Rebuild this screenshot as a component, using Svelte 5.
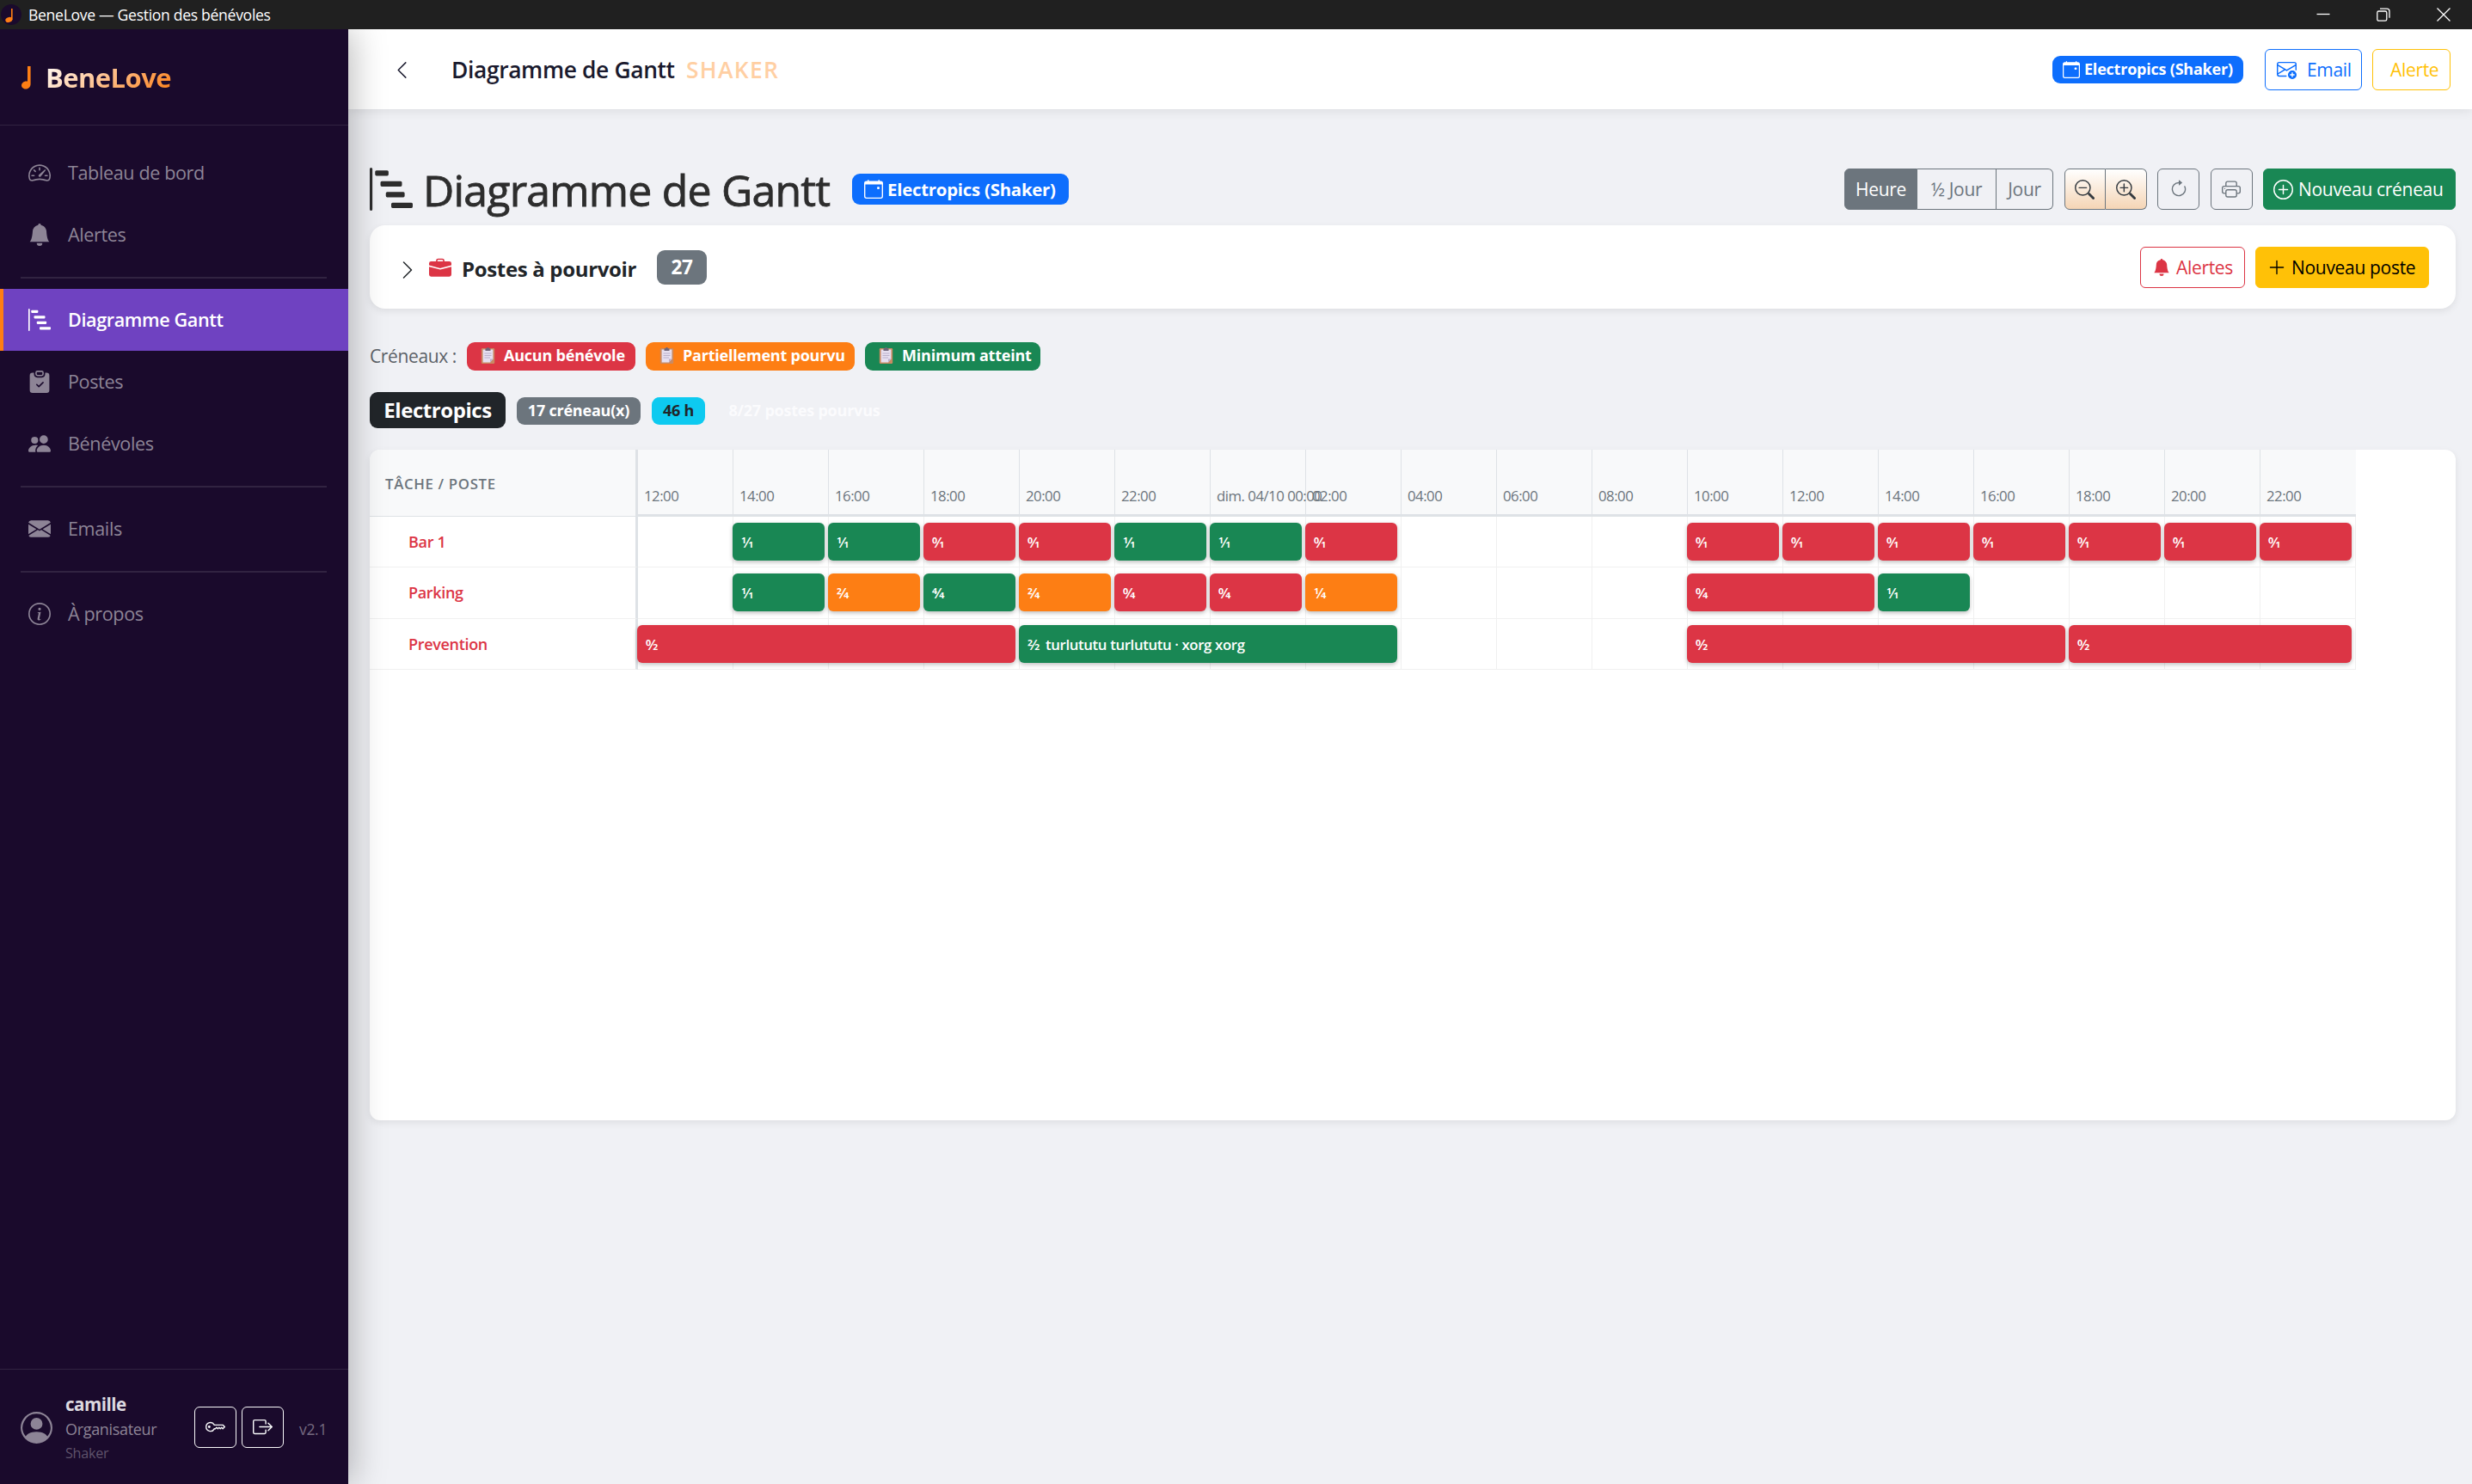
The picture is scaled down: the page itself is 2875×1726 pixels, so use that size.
<script>
  // Outline glyphs on a 16-unit grid; every icon is a list of path data.
  const icons = {
    speedometer: ['M8 4a.5.5 0 0 1 .5.5V6a.5.5 0 0 1-1 0V4.5A.5.5 0 0 1 8 4M3.732 5.732a.5.5 0 0 1 .707 0l.915.914a.5.5 0 1 1-.708.708l-.914-.915a.5.5 0 0 1 0-.707M2 10a.5.5 0 0 1 .5-.5h1.586a.5.5 0 0 1 0 1H2.5A.5.5 0 0 1 2 10m9.5 0a.5.5 0 0 1 .5-.5h1.5a.5.5 0 0 1 0 1H12a.5.5 0 0 1-.5-.5m.754-4.246a.39.39 0 0 0-.527-.02L7.547 9.31a.91.91 0 1 0 1.302 1.258l3.434-4.297a.39.39 0 0 0-.029-.518z', 'M0 10a8 8 0 1 1 15.547 2.661c-.442 1.253-1.845 1.602-2.932 1.25C11.309 13.488 9.475 13 8 13c-1.474 0-3.31.488-4.615.911-1.087.352-2.49.003-2.932-1.25A8 8 0 0 1 0 10m8-7a7 7 0 0 0-6.603 9.329c.203.575.923.876 1.68.63C4.397 12.533 6.358 12 8 12s3.604.532 4.923.96c.757.245 1.477-.056 1.68-.631A7 7 0 0 0 8 3'],
    bell: ['M8 16a2 2 0 0 0 2-2H6a2 2 0 0 0 2 2m.995-14.901a1 1 0 1 0-1.99 0A5 5 0 0 0 3 6c0 1.098-.5 6-2 7h14c-1.5-1-2-5.902-2-7 0-2.42-1.72-4.44-4.005-4.901'],
    steps: ['M.5 0a.5.5 0 0 1 .5.5v15a.5.5 0 0 1-1 0V.5A.5.5 0 0 1 .5 0M2 1.5a.5.5 0 0 1 .5-.5h4a.5.5 0 0 1 .5.5v1a.5.5 0 0 1-.5.5h-4a.5.5 0 0 1-.5-.5zm2 4a.5.5 0 0 1 .5-.5h7a.5.5 0 0 1 .5.5v1a.5.5 0 0 1-.5.5h-7a.5.5 0 0 1-.5-.5zm2 4a.5.5 0 0 1 .5-.5h6a.5.5 0 0 1 .5.5v1a.5.5 0 0 1-.5.5h-6a.5.5 0 0 1-.5-.5zm2 4a.5.5 0 0 1 .5-.5h7a.5.5 0 0 1 .5.5v1a.5.5 0 0 1-.5.5h-7a.5.5 0 0 1-.5-.5z'],
    clipboard: ['M6.5 0A1.5 1.5 0 0 0 5 1.5v1A1.5 1.5 0 0 0 6.5 4h3A1.5 1.5 0 0 0 11 2.5v-1A1.5 1.5 0 0 0 9.5 0zm3 1a.5.5 0 0 1 .5.5v1a.5.5 0 0 1-.5.5h-3a.5.5 0 0 1-.5-.5v-1a.5.5 0 0 1 .5-.5z', 'M4 1.5H3a2 2 0 0 0-2 2V14a2 2 0 0 0 2 2h10a2 2 0 0 0 2-2V3.5a2 2 0 0 0-2-2h-1v1A2.5 2.5 0 0 1 9.5 5h-3A2.5 2.5 0 0 1 4 2.5zm6.854 7.354-3 3a.5.5 0 0 1-.708 0l-1.5-1.5a.5.5 0 0 1 .708-.708L7.5 10.793l2.646-2.647a.5.5 0 0 1 .708.708'],
    people: ['M7 14s-1 0-1-1 1-4 5-4 5 3 5 4-1 1-1 1zm4-6a3 3 0 1 0 0-6 3 3 0 0 0 0 6m-5.784 6A2.24 2.24 0 0 1 5 13c0-1.355.68-2.75 1.936-3.72A6.3 6.3 0 0 0 5 9c-4 0-5 3-5 4s1 1 1 1zM4.5 8a2.5 2.5 0 1 0 0-5 2.5 2.5 0 0 0 0 5'],
    envelope: ['M.05 3.555A2 2 0 0 1 2 2h12a2 2 0 0 1 1.95 1.555L8 8.414zM0 4.697v7.104l5.803-3.558zM6.761 8.83l-6.57 4.027A2 2 0 0 0 2 14h12a2 2 0 0 0 1.808-1.144l-6.57-4.027L8 9.586zm3.436-.586L16 11.801V4.697z'],
    info: ['M8 15A7 7 0 1 1 8 1a7 7 0 0 1 0 14m0 1A8 8 0 1 0 8 0a8 8 0 0 0 0 16', 'm8.93 6.588-2.29.287-.082.38.45.083c.294.07.352.176.288.469l-.738 3.468c-.194.897.105 1.319.808 1.319.545 0 1.178-.252 1.465-.598l.088-.416c-.2.176-.492.246-.686.246-.275 0-.375-.193-.304-.533zM9 4.5a1 1 0 1 1-2 0 1 1 0 0 1 2 0'],
    person: ['M11 6a3 3 0 1 1-6 0 3 3 0 0 1 6 0', 'M0 8a8 8 0 1 1 16 0A8 8 0 0 1 0 8m8-7a7 7 0 0 0-5.468 11.37C3.242 11.226 4.805 10 8 10s4.757 1.225 5.468 2.37A7 7 0 0 0 8 1'],
    key: ['M0 8a4 4 0 0 1 7.465-2H14a.5.5 0 0 1 .354.146l1.5 1.5a.5.5 0 0 1 0 .708l-1.5 1.5a.5.5 0 0 1-.708 0L13 9.207l-.646.647a.5.5 0 0 1-.708 0L11 9.207l-.646.647a.5.5 0 0 1-.708 0L9 9.207l-.646.647A.5.5 0 0 1 8 10h-.535A4 4 0 0 1 0 8m4-3a3 3 0 1 0 2.712 4.285A.5.5 0 0 1 7.163 9h.63l.853-.854a.5.5 0 0 1 .708 0l.646.647.646-.647a.5.5 0 0 1 .708 0l.646.647.646-.647a.5.5 0 0 1 .708 0l.646.647.793-.793-1-1h-6.63a.5.5 0 0 1-.451-.285A3 3 0 0 0 4 5', 'M4 8a1 1 0 1 1-2 0 1 1 0 0 1 2 0'],
    exit: ['M10 12.5a.5.5 0 0 1-.5.5h-8a.5.5 0 0 1-.5-.5v-9a.5.5 0 0 1 .5-.5h8a.5.5 0 0 1 .5.5v2a.5.5 0 0 0 1 0v-2A1.5 1.5 0 0 0 9.5 2h-8A1.5 1.5 0 0 0 0 3.5v9A1.5 1.5 0 0 0 1.5 14h8a1.5 1.5 0 0 0 1.5-1.5v-2a.5.5 0 0 0-1 0z', 'M15.854 8.354a.5.5 0 0 0 0-.708l-3-3a.5.5 0 0 0-.708.708L14.293 7.5H5.5a.5.5 0 0 0 0 1h8.793l-2.147 2.146a.5.5 0 0 0 .708.708z'],
    left: ['M11.354 1.646a.5.5 0 0 1 0 .708L5.707 8l5.647 5.646a.5.5 0 0 1-.708.708l-6-6a.5.5 0 0 1 0-.708l6-6a.5.5 0 0 1 .708 0'],
    right: ['M4.646 1.646a.5.5 0 0 1 .708 0l6 6a.5.5 0 0 1 0 .708l-6 6a.5.5 0 0 1-.708-.708L10.293 8 4.646 2.354a.5.5 0 0 1 0-.708'],
    calendar: ['M11 6.5a.5.5 0 0 1 .5-.5h1a.5.5 0 0 1 .5.5v1a.5.5 0 0 1-.5.5h-1a.5.5 0 0 1-.5-.5z', 'M3.5 0a.5.5 0 0 1 .5.5V1h8V.5a.5.5 0 0 1 1 0V1h1a2 2 0 0 1 2 2v11a2 2 0 0 1-2 2H2a2 2 0 0 1-2-2V3a2 2 0 0 1 2-2h1V.5a.5.5 0 0 1 .5-.5M1 4v10a1 1 0 0 0 1 1h12a1 1 0 0 0 1-1V4z'],
    mailPlus: ['M2 2a2 2 0 0 0-2 2v8.01A2 2 0 0 0 2 14h5.5a.5.5 0 0 0 0-1H2a1 1 0 0 1-.966-.741l5.64-3.471L8 9.583l7-4.2V8.5a.5.5 0 0 0 1 0V4a2 2 0 0 0-2-2zm3.708 6.208L1 11.105V5.383zM1 4.217V4a1 1 0 0 1 1-1h12a1 1 0 0 1 1 1v.217l-7 4.2z', 'M16 12.5a3.5 3.5 0 1 1-7 0 3.5 3.5 0 0 1 7 0m-3.5-2a.5.5 0 0 0-.5.5v1h-1a.5.5 0 0 0 0 1h1v1a.5.5 0 0 0 1 0v-1h1a.5.5 0 0 0 0-1h-1v-1a.5.5 0 0 0-.5-.5'],
    zoomOut: ['M6.5 12a5.5 5.5 0 1 0 0-11 5.5 5.5 0 0 0 0 11M13 6.5a6.5 6.5 0 1 1-13 0 6.5 6.5 0 0 1 13 0', 'M10.344 11.742q.044.06.098.115l3.85 3.85a1 1 0 0 0 1.415-1.414l-3.85-3.85a1 1 0 0 0-.115-.1 6.5 6.5 0 0 1-1.398 1.4z', 'M3 6.5a.5.5 0 0 1 .5-.5h6a.5.5 0 0 1 0 1h-6a.5.5 0 0 1-.5-.5'],
    zoomIn: ['M6.5 12a5.5 5.5 0 1 0 0-11 5.5 5.5 0 0 0 0 11M13 6.5a6.5 6.5 0 1 1-13 0 6.5 6.5 0 0 1 13 0', 'M10.344 11.742q.044.06.098.115l3.85 3.85a1 1 0 0 0 1.415-1.414l-3.85-3.85a1 1 0 0 0-.115-.1 6.5 6.5 0 0 1-1.398 1.4z', 'M6.5 3a.5.5 0 0 1 .5.5V6h2.5a.5.5 0 0 1 0 1H7v2.5a.5.5 0 0 1-1 0V7H3.5a.5.5 0 0 1 0-1H6V3.5a.5.5 0 0 1 .5-.5'],
    refresh: ['M8 3a5 5 0 1 0 4.546 2.914.5.5 0 0 1 .908-.417A6 6 0 1 1 8 2z', 'M8 4.466V.534a.25.25 0 0 1 .41-.192l2.36 1.966c.12.1.12.284 0 .384L8.41 4.658A.25.25 0 0 1 8 4.466'],
    printer: ['M2.5 8a.5.5 0 1 0 0-1 .5.5 0 0 0 0 1', 'M5 1a2 2 0 0 0-2 2v2H2a2 2 0 0 0-2 2v3a2 2 0 0 0 2 2h1v1a2 2 0 0 0 2 2h6a2 2 0 0 0 2-2v-1h1a2 2 0 0 0 2-2V7a2 2 0 0 0-2-2h-1V3a2 2 0 0 0-2-2zM4 3a1 1 0 0 1 1-1h6a1 1 0 0 1 1 1v2H4zm1 5a2 2 0 0 0-2 2v1H2a1 1 0 0 1-1-1V7a1 1 0 0 1 1-1h12a1 1 0 0 1 1 1v3a1 1 0 0 1-1 1h-1v-1a2 2 0 0 0-2-2zm7 2v3a1 1 0 0 1-1 1H5a1 1 0 0 1-1-1v-3a1 1 0 0 1 1-1h6a1 1 0 0 1 1 1'],
    plusCircle: ['M8 15A7 7 0 1 1 8 1a7 7 0 0 1 0 14m0 1A8 8 0 1 0 8 0a8 8 0 0 0 0 16', 'M8 4a.5.5 0 0 1 .5.5v3h3a.5.5 0 0 1 0 1h-3v3a.5.5 0 0 1-1 0v-3h-3a.5.5 0 0 1 0-1h3v-3A.5.5 0 0 1 8 4'],
    briefcase: ['M6.5 1A1.5 1.5 0 0 0 5 2.5V3H1.5A1.5 1.5 0 0 0 0 4.5v1.384l7.614 2.03a1.5 1.5 0 0 0 .772 0L16 5.884V4.5A1.5 1.5 0 0 0 14.5 3H11v-.5A1.5 1.5 0 0 0 9.5 1zm0 1h3a.5.5 0 0 1 .5.5V3H6v-.5a.5.5 0 0 1 .5-.5', 'M0 12.5A1.5 1.5 0 0 0 1.5 14h13a1.5 1.5 0 0 0 1.5-1.5V6.85L8.129 8.947a.5.5 0 0 1-.258 0L0 6.85z'],
    plus: ['M8 2a.5.5 0 0 1 .5.5v5h5a.5.5 0 0 1 0 1h-5v5a.5.5 0 0 1-1 0v-5h-5a.5.5 0 0 1 0-1h5v-5A.5.5 0 0 1 8 2']
  };

  const nav = [
    [{ icon: 'speedometer', label: 'Tableau de bord' }, { icon: 'bell', label: 'Alertes' }],
    [{ icon: 'steps', label: 'Diagramme Gantt', active: true }, { icon: 'clipboard', label: 'Postes' }, { icon: 'people', label: 'Bénévoles' }],
    [{ icon: 'envelope', label: 'Emails' }],
    [{ icon: 'info', label: 'À propos' }]
  ];

  const legend = [
    { label: 'Aucun bénévole', tone: 'none', cls: 'l1' },
    { label: 'Partiellement pourvu', tone: 'part', cls: 'l2' },
    { label: 'Minimum atteint', tone: 'full', cls: 'l3' }
  ];

  const hours = ['12:00', '14:00', '16:00', '18:00', '20:00', '22:00', 'dim. 04/10 00:00', '02:00', '04:00', '06:00', '08:00', '10:00', '12:00', '14:00', '16:00', '18:00', '20:00', '22:00'];

  // A slot is [first column, column span, filled, needed, names].
  const rows = [
    { name: 'Bar 1', slots: [[1, 1, 1, 1], [2, 1, 1, 1], [3, 1, 0, 1], [4, 1, 0, 1], [5, 1, 1, 1], [6, 1, 1, 1], [7, 1, 0, 1], [11, 1, 0, 1], [12, 1, 0, 1], [13, 1, 0, 1], [14, 1, 0, 1], [15, 1, 0, 1], [16, 1, 0, 1], [17, 1, 0, 1]] },
    { name: 'Parking', slots: [[1, 1, 1, 1], [2, 1, 2, 4], [3, 1, 4, 4], [4, 1, 2, 4], [5, 1, 0, 4], [6, 1, 0, 4], [7, 1, 1, 4], [11, 2, 0, 4], [13, 1, 1, 1]] },
    { name: 'Prevention', slots: [[0, 4, 0, 2], [4, 4, 2, 2, 'turlututu turlututu · xorg xorg'], [11, 4, 0, 2], [15, 3, 0, 2]] }
  ];
  const tone = (got, need) => (got === 0 ? 'none' : got < need ? 'part' : 'full');
</script>

{#snippet icon(name, cls = '')}
  <svg class="icon {cls}" viewBox="0 0 16 16" fill="currentColor" fill-rule="evenodd" aria-hidden="true">
    {#each icons[name] as d}<path {d} />{/each}
  </svg>
{/snippet}

<div class="app">
  <div class="titlebar">
    <svg class="appicon" viewBox="0 0 24 24"><circle cx="12" cy="12" r="12" fill="#1a0a2c" /><ellipse cx="9.3" cy="18" rx="4.1" ry="2.9" fill="#fd7e14" transform="rotate(-18 9.3 18)" /><rect x="12" y="5" width="1.6" height="13" fill="#fd7e14" /></svg>
    <span class="wintitle">BeneLove — Gestion des bénévoles</span>
    <div class="winbtns">
      <svg viewBox="0 0 16 16"><path d="M.5 7.5h15" /></svg>
      <svg viewBox="0 0 16 16"><rect x=".8" y="4" width="11" height="11.2" rx="1.8" /><path d="M4 1.2h8a3 3 0 0 1 3 3v7.6" /></svg>
      <svg viewBox="0 0 16 16"><path d="M.5.5l15 15M15.5.5l-15 15" /></svg>
    </div>
  </div>

  <div class="body">
    <aside class="sidebar">
      <div class="brand">
        <svg class="note" viewBox="0 0 11 27"><path d="M7 0h3.6v20.5c0 3.600-2.400 6-5.600 6-2.800 0-5-1.700-5-4 0-2.800 2.600-5 5.400-5h1.600z" fill="#fd7e14" /></svg>
        <span class="brandname">BeneLove</span>
      </div>
      <nav>
        {#each nav as group, g}
          {#if g}<hr />{/if}
          {#each group as item}
            <div class="item" class:active={item.active}>{@render icon(item.icon)}<span>{item.label}</span></div>
          {/each}
        {/each}
      </nav>
      <div class="user">
        {@render icon('person', 'avatar')}
        <div class="who"><b>camille</b><span class="role">Organisateur</span><span class="org">Shaker</span></div>
        <div class="sqbtn">{@render icon('key')}</div>
        <div class="sqbtn">{@render icon('exit')}</div>
        <span class="ver">v2.1</span>
      </div>
    </aside>

    <main>
      <header>
        {@render icon('left', 'back')}
        <span class="htitle">Diagramme de Gantt</span>
        <span class="hsub">SHAKER</span>
        <div class="badge ev">{@render icon('calendar')}<span>Electropics (Shaker)</span></div>
        <div class="btn email">{@render icon('mailPlus')}<span>Email</span></div>
        <div class="btn alert"><span>Alerte</span></div>
      </header>

      <div class="content">
        <div class="pagehead">
          {@render icon('steps', 'big')}
          <h2>Diagramme de Gantt</h2>
          <div class="badge ev2">{@render icon('calendar')}<span>Electropics (Shaker)</span></div>
          <div class="tools">
            <div class="group"><span class="btn on"><span>Heure</span></span><span class="btn half"><span>½ Jour</span></span><span class="btn day"><span>Jour</span></span></div>
            <div class="group zoom"><span class="btn z1">{@render icon('zoomOut')}</span><span class="btn z2">{@render icon('zoomIn')}</span></div>
            <span class="btn grey rf">{@render icon('refresh')}</span>
            <span class="btn grey pr">{@render icon('printer')}</span>
            <span class="btn create">{@render icon('plusCircle')}<span>Nouveau créneau</span></span>
          </div>
        </div>

        <section class="card">
          {@render icon('right', 'chev')}
          {@render icon('briefcase', 'brief')}
          <b class="ctitle">Postes à pourvoir</b>
          <span class="count">27</span>
          <span class="btn al2">{@render icon('bell')}<span>Alertes</span></span>
          <span class="btn np">{@render icon('plus')}<span>Nouveau poste</span></span>
        </section>

        <div class="legend">
          <span class="lead">Créneaux :</span>
          {#each legend as l}
            <span class="badge {l.tone} {l.cls}">
              <svg class="clip" viewBox="0 0 17 19"><rect x=".8" y="1" width="15.400" height="18" rx="1.200" fill="#c98a63" /><path d="M2.600 2.600h11.800v11l-3.400 3.900H2.600z" fill="#e6dff0" /><path d="M11 17.500v-3.900h3.400z" fill="#b9aecb" /><path d="M5.500 1.200h1.700a1.300 1.300 0 0 1 2.600 0h1.700v2.800h-6z" fill="#6e6478" /><path d="M4.500 7h8M4.500 9.500h8M4.500 12h6.500" stroke="#b5abc6" stroke-width=".9" /></svg>
              <span>{l.label}</span>
            </span>
          {/each}
        </div>

        <div class="stats">
          <b class="ename">Electropics</b>
          <b class="badge s1">17 créneau(x)</b>
          <b class="badge s2">46 h</b>
          <b class="badge s3">8/27 postes pourvus</b>
        </div>

        <section class="gantt">
          <div class="row head">
            <div class="label">TÂCHE / POSTE</div>
            <div class="track">{#each hours as h}<div class="cell">{h}</div>{/each}</div>
          </div>
          {#each rows as row}
            <div class="row">
              <div class="label">{row.name}</div>
              <div class="track">
                {#each row.slots as [at, span, got, need, names]}
                  <div class="slot {tone(got, need)}" style:grid-column="{at + 1} / span {span}"><span class="frac">{got}⁄{need}</span>{#if names}<span>{names}</span>{/if}</div>
                {/each}
              </div>
            </div>
          {/each}
        </section>
      </div>
    </main>
  </div>
</div>

<style>
  :global(body) { margin: 0; background: #f0f1f5; }
  .app { width: 2875px; height: 1726px; display: flex; flex-direction: column; overflow: hidden; font: 400 21px/1.4 'Open Sans', 'Noto Sans', sans-serif; color: #212529; }
  :where(.app *) { box-sizing: border-box; letter-spacing: -0.018em; white-space: nowrap; }
  .icon { display: block; width: 24px; height: 24px; flex: none; }

  .titlebar { height: 34px; flex: none; background: #202020; color: #fff; display: flex; align-items: center; padding-left: 1px; position: relative; z-index: 3; }
  .appicon { width: 24px; height: 24px; }
  .wintitle { font-size: 17.6px; margin-left: 8px; }
  .winbtns { margin-left: auto; display: flex; gap: 54px; padding-right: 25px; }
  .winbtns svg { width: 16px; height: 16px; fill: none; stroke: #fff; stroke-width: 1.3; }

  .body { flex: 1; display: flex; min-height: 0; }
  .sidebar { width: 405px; flex: none; background: #1a0a2c; display: flex; flex-direction: column; box-shadow: 6px 0 36px rgba(0, 0, 0, 0.25); position: relative; z-index: 2; }
  .brand { height: 112px; flex: none; border-bottom: 1px solid #312341; display: flex; align-items: center; padding-left: 25px; }
  .note { width: 11px; height: 27px; margin: 2px 17px 0 0; }
  .brandname { font-size: 31px; font-weight: 700; padding-top: 2px; background: linear-gradient(135deg, #fff 0%, #fd7e14 100%); -webkit-background-clip: text; background-clip: text; color: transparent; }
  nav { padding-top: 19px; flex: 1; }
  .item { height: 72px; display: flex; align-items: center; padding-left: 33px; gap: 20px; font-size: 21.6px; color: #8d8496; }
  .item span { padding-top: 1px; }
  .item .icon { width: 26px; height: 26px; }
  .item.active { background: #6f42c1; color: #fff; font-weight: 600; border-left: 4px solid #fd7e14; padding-left: 29px; }
  hr { height: 2px; border: 0; margin: 13px 25px 12px 24px; background: #312341; }
  .user { height: 134px; flex: none; border-top: 1px solid #312341; display: flex; align-items: center; padding: 2px 0 0 24px; }
  .user .avatar { width: 37px; height: 37px; color: #8d8496; }
  .who { width: 150px; margin-left: 15px; display: flex; flex-direction: column; }
  .who b { font-size: 20.600px; line-height: 30px; color: #dddae0; letter-spacing: -0.025em; }
  .role { font-size: 18px; line-height: 29px; color: #8d8496; }
  .org { font-size: 16.200px; line-height: 27px; color: #5f536b; }
  .sqbtn { width: 49px; height: 48px; border: 1.5px solid #f8f9fa; border-radius: 6px; display: grid; place-items: center; color: #f8f9fa; margin: 0 6px 2px 0; }
  .sqbtn .icon { width: 23px; height: 23px; }
  .ver { margin-left: 12px; font-size: 17.500px; color: #766b80; padding-top: 4px; }

  main { flex: 1; min-width: 0; display: flex; flex-direction: column; background: #f0f1f5; }
  header { height: 93px; flex: none; background: #fff; display: flex; align-items: center; padding: 0 25px 0 52px; box-shadow: 0 3px 12px rgba(0, 0, 0, 0.08); position: relative; z-index: 1; }
  .back { width: 23px; height: 23px; margin: 2px 1px 0 -1px; color: #1a1a2e; }
  .htitle { width: 263px; margin-left: 45px; padding-top: 2px; font-size: 26.400px; font-weight: 600; letter-spacing: -0.014em; color: #1a1a2e; }
  .hsub { margin: 0 auto 0 10px; padding-top: 2px; font-size: 26.400px; font-weight: 600; letter-spacing: 0.05em; color: #ffcfa3; }
  .badge { height: 32px; border-radius: 9px; display: flex; align-items: center; color: #fff; font-weight: 700; font-size: 18px; letter-spacing: -0.012em; }
  .badge span { letter-spacing: -0.012em; }
  .ev { width: 222px; background: #0d6efd; padding-left: 12px; gap: 5px; }
  .ev .icon { width: 20px; height: 20px; }
  .btn { height: 48px; display: flex; align-items: center; border: 1.5px solid; border-radius: 6px; font-size: 21px; }
  .btn > span { padding-top: 2px; letter-spacing: -0.015em; }
  .email { width: 113px; margin-left: 25px; color: #0d6efd; padding-left: 13px; gap: 12px; }
  .email .icon { width: 23px; height: 23px; }
  .alert { width: 91px; margin-left: 12px; color: #ffc107; padding-left: 20px; }

  .content { padding: 69px 19px 0 25px; display: flex; flex-direction: column; }
  .pagehead { height: 48px; display: flex; align-items: center; }
  .big { width: 50px; height: 50px; color: #2d2d2d; }
  h2 { margin: 0 0 0 12px; padding-top: 2px; width: 499px; font-size: 50px; font-weight: 400; line-height: 60px; letter-spacing: -0.016em; color: #2d2d2d; -webkit-text-stroke: 0.8px #2d2d2d; }
  .ev2 { width: 252px; height: 36px; background: #0d6efd; padding-left: 14px; gap: 5px; font-size: 20.400px; }
  .ev2 .icon { width: 22px; height: 22px; }
  .tools { margin-left: auto; display: flex; gap: 12.500px; }
  .group { display: flex; }
  .group .btn { color: #6c757d; border-color: #6c757d; border-radius: 0; justify-content: center; }
  .group .btn + .btn { border-left: 0; }
  .group .btn:first-child { border-radius: 6px 0 0 6px; }
  .group .btn:last-child { border-radius: 0 6px 6px 0; }
  .group .on { width: 85px; background: #6c757d; color: #fff; }
  .half { width: 92px; }
  .day { width: 66px; }
  .zoom .btn { width: 48px; background: linear-gradient(#fff, #f5d5b5); color: #343a40; }
  .zoom .icon { width: 23px; height: 23px; }
  .grey { width: 49px; border-color: #6c757d; color: #6c757d; justify-content: center; }
  .grey .icon { width: 22px; height: 22px; }
  .create { width: 224px; background: #198754; border-color: #198754; color: #fff; padding-left: 11px; gap: 6px; }
  .create .icon { width: 23px; height: 23px; }

  .card { margin-top: 18px; height: 97px; background: #fff; border-radius: 18px; box-shadow: 0 3px 9px rgba(0, 0, 0, 0.08); display: flex; align-items: center; padding: 0 31px 0 32px; }
  .chev { width: 24px; height: 24px; margin-top: 6px; }
  .brief { width: 26px; height: 26px; margin-left: 13px; color: #dc3545; margin-top: 3px; }
  .ctitle { width: 206px; margin-left: 12px; font-size: 24px; letter-spacing: -0.014em; padding-top: 5px; }
  .count { width: 58px; height: 40px; margin: 0 auto 0 21px; border-radius: 9px; background: #6c757d; color: #fff; font-weight: 700; font-size: 22.500px; display: grid; place-items: center; }
  .al2 { width: 122px; color: #dc3545; padding-left: 14px; gap: 7px; }
  .al2 .icon { width: 20px; height: 20px; }
  .np { width: 202px; margin-left: 12px; background: #ffc107; border-color: #ffc107; color: #000; padding-left: 13px; gap: 6px; }
  .np .icon { width: 22px; height: 22px; }

  .legend { height: 33px; margin-top: 39px; display: flex; align-items: center; }
  .lead { width: 113px; color: #5b6167; padding-top: 1px; }
  .legend .badge { height: 33px; margin-right: 12px; padding: 0 0 2px 16px; }
  .l1 { width: 196px; }
  .l2 { width: 243px; }
  .l3 { width: 204px; }
  .clip { width: 17px; height: 19px; margin-right: 10px; }
  .none { background: #dc3545; }
  .part { background: #fd7e14; }
  .full { background: #198754; }

  .stats { height: 42px; margin-top: 25px; display: flex; align-items: center; }
  .ename { width: 158px; height: 42px; border-radius: 9px; background: #212529; color: #fff; font-size: 24px; display: grid; place-items: center; }
  .stats .badge { justify-content: center; margin: 1px 0 0 13px; }
  .s1 { width: 144px; background: #6c757d; }
  .s2 { width: 62px; background: #0dcaf0; color: #212529; }
  .s3 { width: 205px; color: #fbfbfd; }

  .gantt { margin-top: 25px; height: 780px; background: #fff; border-radius: 12px; overflow: hidden; box-shadow: 0 3px 9px rgba(0, 0, 0, 0.08); }
  .row { display: flex; height: 59px; }
  .row:nth-child(3) { height: 60px; }
  .label { width: 312px; flex: none; border-right: 3px solid #dee2e6; border-bottom: 1px solid #f0f0f0; padding: 1px 0 0 45px; display: flex; align-items: center; font-size: 18px; font-weight: 600; color: #dc3545; }
  .track { width: 1998px; display: grid; grid-template-columns: repeat(18, 111px); border-bottom: 1px solid #f0f0f0; background: repeating-linear-gradient(90deg, transparent 0 110px, #f0f0f0 110px 111px); }
  .head { height: 78px; }
  .head .label { background: #f8f9fa; border-bottom: 1px solid #dee2e6; color: #6c757d; font-size: 16.800px; letter-spacing: 0.04em; padding: 2px 0 0 18px; }
  .head .track { border-bottom: 3px solid #dee2e6; background: #f8f9fa; }
  .cell { width: 111px; border-right: 1px solid #dee2e6; padding: 42px 0 0 7px; font-size: 16.800px; line-height: 24px; letter-spacing: -0.03em; color: #6c757d; }
  .cell:last-child { border-right: 0; }
  .slot { height: 44px; margin: 7px 5px 0 -1px; border-radius: 6px; color: #fff; font-size: 16.800px; font-weight: 600; line-height: 46px; padding-left: 10px; box-shadow: 0 2px 5px rgba(0, 0, 0, 0.25); display: flex; gap: 5px; }
  .slot span { letter-spacing: -0.022em; }
  .slot .frac { min-width: 16px; font-variant-numeric: diagonal-fractions; letter-spacing: 0; }
</style>
